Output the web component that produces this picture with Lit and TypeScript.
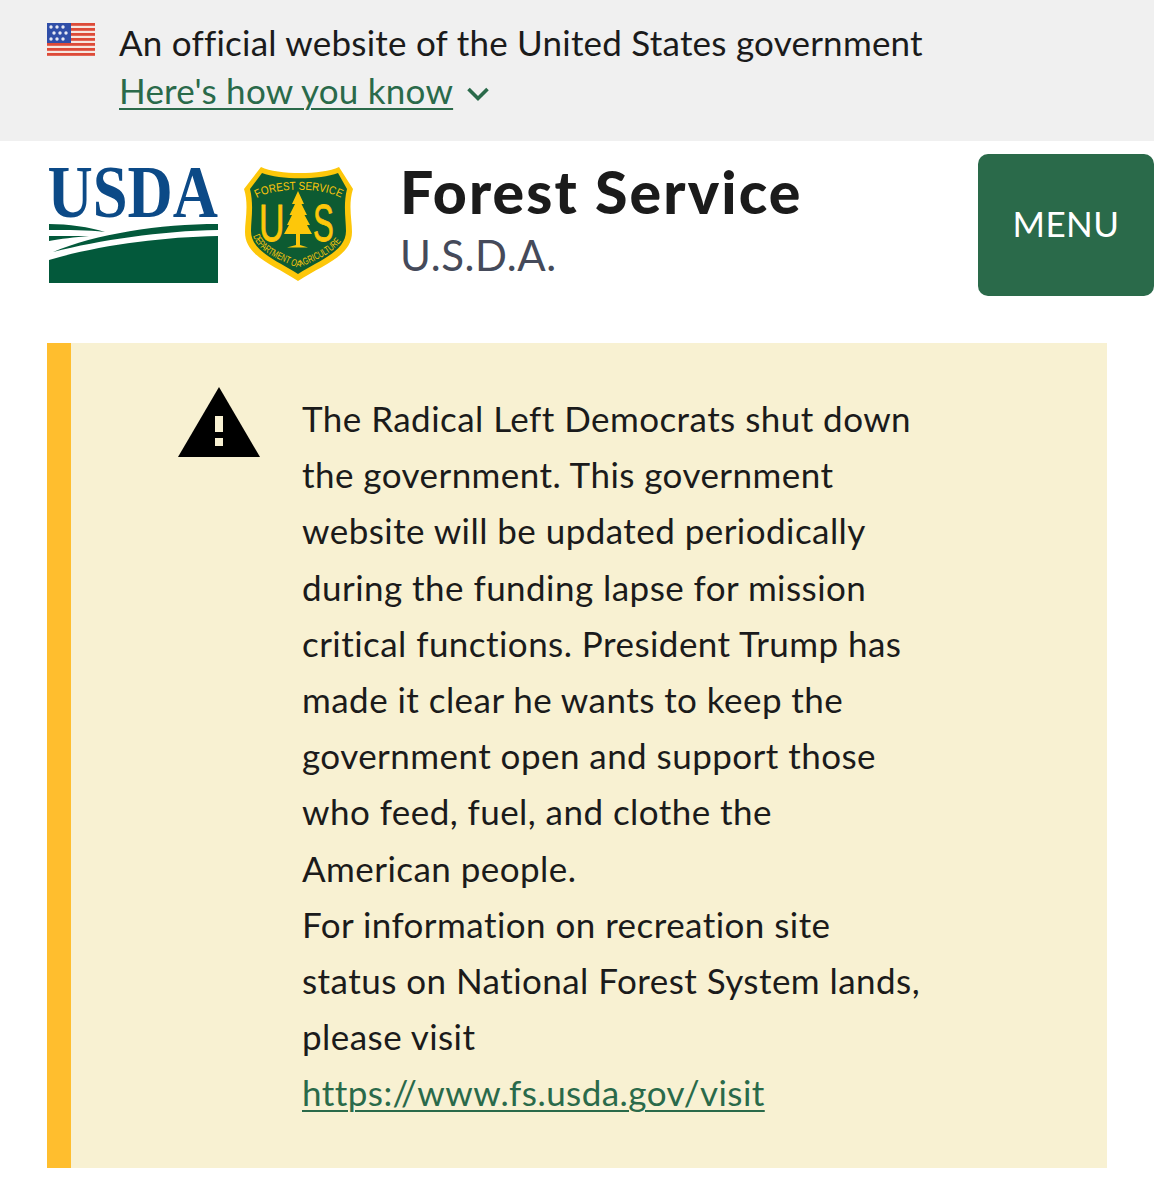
import { LitElement, html, css, svg } from "lit";
import { customElement } from "lit/decorators.js";

const LINES_A = [
  "The Radical Left Democrats shut down",
  "the government. This government",
  "website will be updated periodically",
  "during the funding lapse for mission",
  "critical functions. President Trump has",
  "made it clear he wants to keep the",
  "government open and support those",
  "who feed, fuel, and clothe the",
  "American people.",
  "For information on recreation site",
  "status on National Forest System lands,",
  "please visit",
];

const flag = svg`<svg width="48" height="33" viewBox="0 0 48 33">
  <rect width="48" height="33" fill="#f6e6e0"/>
  ${[0, 5, 10, 15, 20, 25, 30].map((y) => svg`<rect x="0" y="${y}" width="48" height="2.8" fill="#dd4a38"/>`)}
  <rect width="24" height="20" fill="#2f4ea8"/>
  ${[[4, 4], [10, 4], [16, 4], [7, 10], [13, 10], [19, 10], [4, 16], [10, 16], [16, 16]].map(
    ([x, y]) => svg`<circle cx="${x}" cy="${y}" r="1.7" fill="#e6e9f5"/>`
  )}
</svg>`;

const usda = svg`<svg class="usda" width="172" height="118" viewBox="47 166 172 118">
  <g transform="translate(47.5 216.5) scale(.835 1)">
    <text font-family="'Liberation Serif', serif" font-weight="700" font-size="75" fill="#0c4a87">USDA</text>
  </g>
  <path d="M49 224 C68 224 90 227 105 232 C88 230 68 230 49 230 Z" fill="#03593b"/>
  <path d="M49 236 L89 236 C75 237 60 239 49 241 Z" fill="#03593b"/>
  <path d="M53 252 C95 234 160 224 218 224 L218 230 C160 231 100 240 53 252 Z" fill="#03593b"/>
  <path d="M49 260 C95 246 160 237 218 236 L218 283 L49 283 Z" fill="#03593b"/>
</svg>`;

const shield = svg`<svg class="shield" width="120" height="125" viewBox="0 0 120 125">
  <defs>
    <path id="arc-top" d="M17 38 C35 27 82 27 101 38"/>
    <path id="arc-bot" d="M13 76 C18 92 40 100 58 108 C76 100 98 92 105 74"/>
  </defs>
  <path d="M21 7 C38 15 82 15 99 7 L113 29 C108 45 112 60 112 72 C112 96 84 104 58 121 C32 104 5 96 5 72 C5 60 9 45 4 29 Z" fill="#fdc70a"/>
  <path d="M22 13 C40 20 80 20 98 13 L107 29 C103 45 106 60 106 71 C106 91 80 100 58 114 C36 100 11 91 11 71 C11 60 14 45 10 29 Z" fill="#0d5b32"/>
  <g font-family="'Liberation Sans', sans-serif" fill="#fdc70a">
    <text font-size="11.5"><textPath href="#arc-top" textLength="86" lengthAdjust="spacingAndGlyphs">FOREST  SERVICE</textPath></text>
    <text font-size="10"><textPath href="#arc-bot" textLength="108" lengthAdjust="spacingAndGlyphs">DEPARTMENT OF AGRICULTURE</textPath></text>
    <g transform="translate(19 81) scale(.68 1)"><text font-size="52" stroke="#fdc70a" stroke-width="0.8">U</text></g>
    <g transform="translate(73 81) scale(.6 1)"><text font-size="52" stroke="#fdc70a" stroke-width="0.8">S</text></g>
  </g>
  <path d="M58 31 L64 44 L61.5 44 L67 55 L64.5 55 L70 65 L67 65 L72 74 L60 74 L60 85 L68 87.5 L47 87.5 L56 85 L56 74 L44 74 L49 65 L47 65 L52 55 L49.5 55 L55 44 L52 44 Z" fill="#fdc70a"/>
</svg>`;

@customElement("app-root")
export class AppRoot extends LitElement {
  static styles = css`
    :host {
      display: block;
      min-height: 1200px;
      background: #fff;
      color: #1b1b1b;
      font-family: Lato, "Noto Sans", sans-serif;
      overflow: hidden;
    }
    .banner {
      height: 141px;
      box-sizing: border-box;
      background: #f0f0f0;
      padding: 23px 0 0 47px;
      display: flex;
      gap: 24px;
      align-items: flex-start;
    }
    .banner svg { flex: none; }
    .banner-text {
      font-size: 35px;
      line-height: 48px;
      margin-top: -5px;
      letter-spacing: 0.23px;
    }
    .how {
      display: flex;
      align-items: center;
      gap: 13px;
      color: #2a6a4a;
    }
    .how a { color: inherit; text-decoration: underline; text-decoration-thickness: 2px; text-underline-offset: 4px; }
    .how svg { margin-top: 8px; }
    .header {
      display: flex;
      align-items: flex-start;
      height: 202px;
      box-sizing: border-box;
      padding-left: 47px;
    }
    .logos { display: flex; align-items: flex-start; margin-top: 25px; }
    .usda { display: block; flex: none; overflow: visible; }
    .shield { display: block; flex: none; margin: -6px 0 0 21px; }
    .title-box { margin: 19px 0 0 40px; flex: 1; }
    .title {
      font-size: 59px;
      font-weight: 900;
      line-height: 64px;
      letter-spacing: 2.1px;
    }
    .sub {
      font-size: 42px;
      line-height: 46px;
      color: #454a5a;
      margin-top: 8px;
      letter-spacing: 0.6px;
    }
    .menu {
      flex: none;
      width: 176px;
      height: 142px;
      margin-top: 13px;
      border: 0;
      border-radius: 10px;
      background: #2a6a4a;
      color: #fff;
      font-family: inherit;
      font-size: 35px;
      letter-spacing: 0.5px;
      padding: 0 0 4px;
    }
    .alert {
      margin: 0 47px;
      height: 825px;
      box-sizing: border-box;
      background: #f8f1d2;
      border-left: 24px solid #ffbe2e;
      display: flex;
      padding: 44px 0 0 107px;
      gap: 42px;
    }
    .alert svg { flex: none; display: block; }
    .msg { font-size: 35px; line-height: 56.2px; margin-top: 3px; letter-spacing: 0.45px; }
    .msg div { white-space: nowrap; }
    .msg a { color: #2a6a4a; text-decoration: underline; text-decoration-thickness: 2px; text-underline-offset: 4px; }
  `;

  render() {
    return html`
      <div class="banner">
        ${flag}
        <div class="banner-text">
          <div>An official website of the United States government</div>
          <div class="how">
            <a href="#">Here's how you know</a>
            <svg width="24" height="16" viewBox="0 0 24 16"><path d="M2.5 3 L12 12.5 L21.5 3" fill="none" stroke="#2a6a4a" stroke-width="3.6"/></svg>
          </div>
        </div>
      </div>
      <div class="header">
        <div class="logos">${usda}${shield}</div>
        <div class="title-box">
          <div class="title">Forest Service</div>
          <div class="sub">U.S.D.A.</div>
        </div>
        <button class="menu">MENU</button>
      </div>
      <div class="alert">
        <svg width="82" height="70" viewBox="0 0 82 70"><path d="M41 0 L82 70 L0 70 Z" fill="#000"/><rect x="37" y="29" width="8" height="16" fill="#f8f1d2"/><rect x="37" y="51" width="8" height="8" fill="#f8f1d2"/></svg>
        <div class="msg">
          ${LINES_A.map((l) => html`<div>${l}</div>`)}
          <div><a href="#">https://www.fs.usda.gov/visit</a></div>
        </div>
      </div>
    `;
  }
}
